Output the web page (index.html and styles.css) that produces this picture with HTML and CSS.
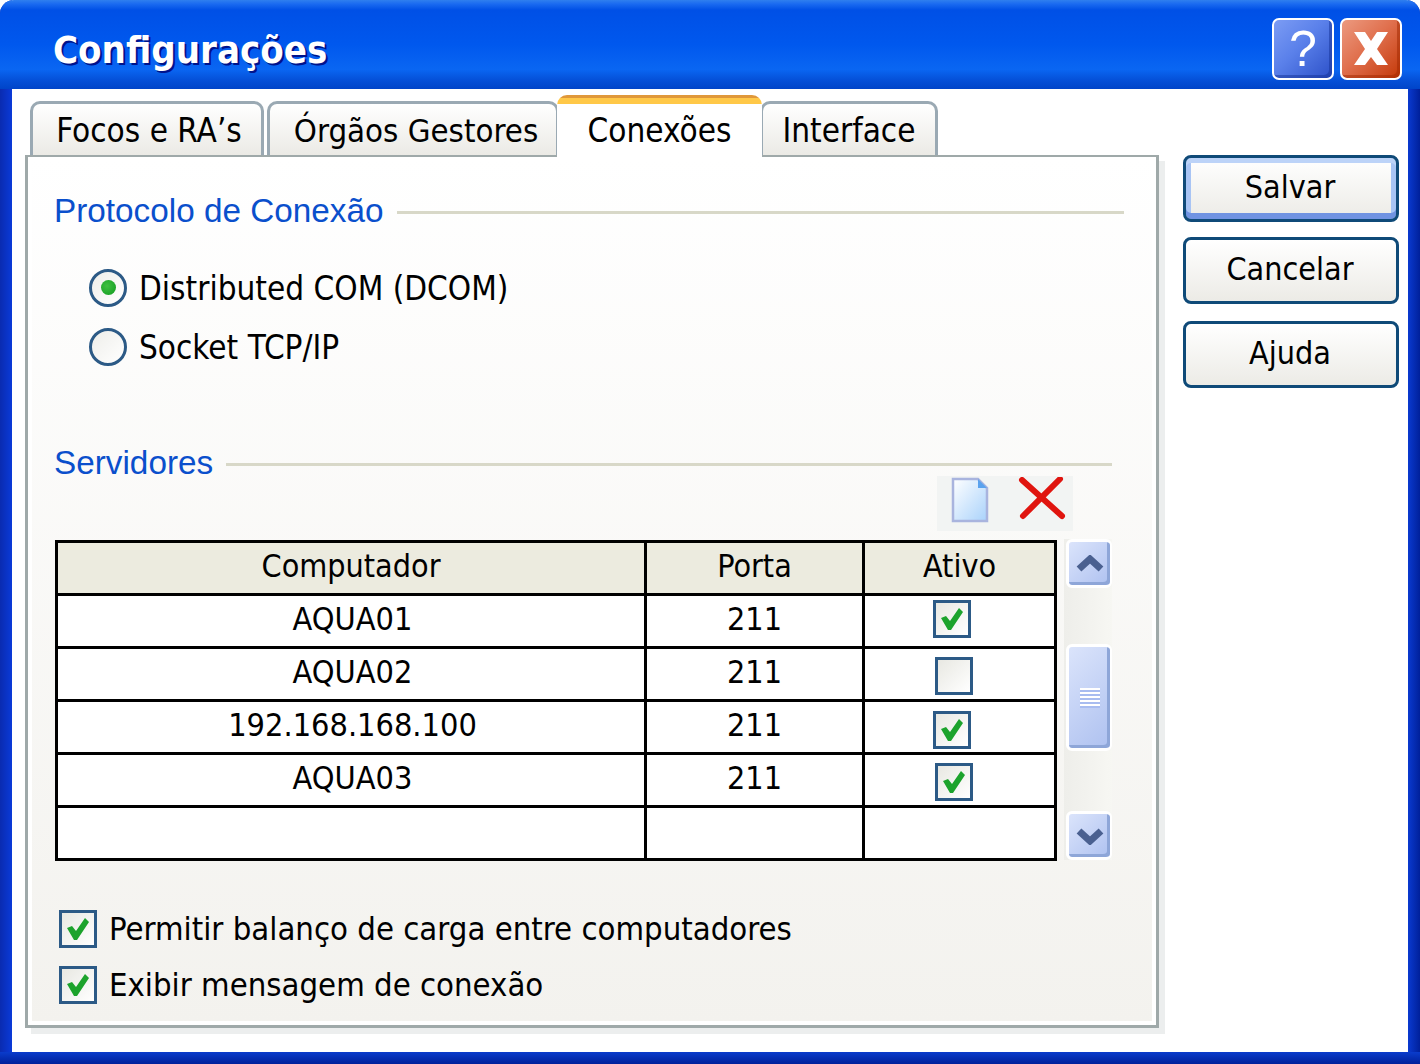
FILE: index.html
```html
<!DOCTYPE html>
<html lang="pt-BR">
<head>
    <meta charset="UTF-8">
    <meta name="viewport" content="width=device-width, initial-scale=1.0">
    <title>Configurações</title>
    <link rel="stylesheet" href="styles.css">
</head>
<body>
    <div class="window">
        <div class="titlebar">
            <h1 class="title">Configurações</h1>
            <div class="title-buttons">
                <div class="title-btn help-btn">?</div>
                <div class="title-btn close-btn">
                    <svg width="36" height="36" viewBox="0 0 36 36"><path d="M1 1h11l6 9 6-9h11L24 18l11 16H24l-6-8-6 8H1l11-16z" fill="#fff"/></svg>
                </div>
            </div>
        </div>
        <div class="client">
            <div class="main">
                <div class="tabs">
                    <div class="tab tab-focos">Focos e RA’s</div>
                    <div class="tab tab-orgaos">Órgãos Gestores</div>
                    <div class="tab tab-active">Conexões</div>
                    <div class="tab tab-interface">Interface</div>
                </div>
                <div class="panel">
                    <div class="group-title group-protocolo"><span>Protocolo de Conexão</span><i></i></div>
                    <div class="radios">
                        <div class="radio-row"><span class="radio"><b></b></span>Distributed COM (DCOM)</div>
                        <div class="radio-row"><span class="radio"></span>Socket TCP/IP</div>
                    </div>
                    <div class="group-title group-servidores"><span>Servidores</span><i></i></div>
                    <div class="toolbar">
                        <div class="toolbar-box">
                            <svg width="40" height="46" viewBox="0 0 40 46">
                                <defs><linearGradient id="doc" x1="0" y1="0" x2="1" y2="1"><stop offset="0" stop-color="#fff"/><stop offset="1" stop-color="#a9d2fb"/></linearGradient></defs>
                                <path d="M3 2h25l9 9v33H3z" fill="url(#doc)" stroke="#a9b4de" stroke-width="2.5"/>
                                <path d="M28 2l9 9h-9z" fill="#5aa2ee"/>
                            </svg>
                            <svg width="48" height="46" viewBox="0 0 48 46"><path d="M4 3l40 36M42 2L5 39" stroke="#e0150f" stroke-width="6" stroke-linecap="round" fill="none"/></svg>
                        </div>
                    </div>
                    <div class="table-wrap">
                        <table class="servers">
                            <tr><th class="col-pc">Computador</th><th class="col-port">Porta</th><th>Ativo</th></tr>
                            <tr><td class="cell-name">AQUA01</td><td>211</td><td class="cell-check"><span class="check row-1"><svg width="32" height="32" viewBox="0 0 32 32"><path d="M5 15l5-2 4 5 9-13 4 4-12 18h-3z" class="tick"/></svg></span></td></tr>
                            <tr><td class="cell-name">AQUA02</td><td>211</td><td class="cell-check"><span class="check row-2"></span></td></tr>
                            <tr><td class="cell-name">192.168.168.100</td><td>211</td><td class="cell-check"><span class="check row-3"><svg width="32" height="32" viewBox="0 0 32 32"><path d="M5 15l5-2 4 5 9-13 4 4-12 18h-3z" class="tick"/></svg></span></td></tr>
                            <tr><td class="cell-name">AQUA03</td><td>211</td><td class="cell-check"><span class="check row-2"><svg width="32" height="32" viewBox="0 0 32 32"><path d="M5 15l5-2 4 5 9-13 4 4-12 18h-3z" class="tick"/></svg></span></td></tr>
                            <tr><td></td><td></td><td></td></tr>
                        </table>
                        <div class="scrollbar">
                            <div class="sb-btn">
                                <svg width="28" height="18" viewBox="0 0 28 18"><path d="M3 14L14 4l11 10" class="arrow"/></svg>
                            </div>
                            <div class="sb-thumb">
                                <div class="grip"></div>
                            </div>
                            <div class="sb-btn">
                                <svg width="28" height="18" viewBox="0 0 28 18"><path d="M3 4l11 10L25 4" class="arrow"/></svg>
                            </div>
                        </div>
                    </div>
                    <div class="options">
                        <div class="option"><span class="check"><svg width="32" height="32" viewBox="0 0 32 32"><path d="M5 15l5-2 4 5 9-13 4 4-12 18h-3z" class="tick"/></svg></span>Permitir balanço de carga entre computadores</div>
                        <div class="option"><span class="check"><svg width="32" height="32" viewBox="0 0 32 32"><path d="M5 15l5-2 4 5 9-13 4 4-12 18h-3z" class="tick"/></svg></span>Exibir mensagem de conexão</div>
                    </div>
                </div>
            </div>
            <div class="side">
                <div class="btn btn-default">Salvar</div>
                <div class="btn">Cancelar</div>
                <div class="btn btn-help">Ajuda</div>
            </div>
        </div>
    </div>
</body>
</html>
```

FILE: styles.css
```css
html, body {
    margin: 0;
    padding: 0;
    background: #fff;
}
body {
    font-family: "DejaVu Sans Condensed", "DejaVu Sans", sans-serif;
    font-size: 32px;
    color: #000;
    overflow: hidden;
}
.window {
    width: 1420px;
    height: 1064px;
    display: flex;
    flex-direction: column;
    background:
        linear-gradient(#0a3ccc, #00209a) bottom / 100% 12px no-repeat,
        linear-gradient(90deg, #0a2bb0, #0a3ad8) left / 12px 100% no-repeat,
        linear-gradient(90deg, #0a3ad0, #00209a) right / 12px 100% no-repeat;
    border-radius: 14px 14px 0 0;
    overflow: hidden;
}
.titlebar {
    height: 89px;
    flex: none;
    box-sizing: border-box;
    padding: 18px 18px 0 53px;
    display: flex;
    justify-content: space-between;
    background: linear-gradient(#2f7fee 0, #1a6af0 4px, #0050e6 10px, #0058ee 50%, #0a66f2 78%, #0550d8 90%, #0044c8 100%);
}
.title {
    margin: 7px 0 0;
    font-size: 38px;
    font-weight: bold;
    line-height: 50px;
    color: #fff;
    text-shadow: 2px 2px 0 #00138c;
}
.title-buttons {
    display: flex;
    gap: 6px;
}
.title-btn {
    width: 62px;
    height: 62px;
    box-sizing: border-box;
    border: 2px solid #fff;
    border-radius: 7px;
    display: flex;
    align-items: center;
    justify-content: center;
    color: #fff;
}
.help-btn {
    font-size: 50px;
    font-family: "Liberation Sans", sans-serif;
    background: linear-gradient(135deg, #7c9cf4, #5a80ea 45%, #2c50c8);
    box-shadow: inset -3px -3px 0 rgba(20, 50, 150, 0.5);
}
.close-btn {
    background: linear-gradient(135deg, #ec9a80, #e0704e 45%, #c43808);
    box-shadow: inset -3px -3px 0 rgba(160, 40, 0, 0.5);
}
.client {
    flex: 1;
    margin: 0 12px 12px;
    background: #fff;
    display: flex;
    position: relative;
}
.main {
    width: 1146px;
    margin-left: 13px;
}
.tabs {
    height: 66px;
    display: flex;
    align-items: flex-end;
    padding-left: 5px;
    font-size: 33px;
}
.tab {
    box-sizing: border-box;
    height: 54px;
    border: 3px solid #9aa9b3;
    border-bottom: 0;
    border-radius: 10px 10px 0 0;
    background: linear-gradient(#fff, #ebeae5);
    display: flex;
    align-items: center;
    justify-content: center;
    padding-top: 2px;
    line-height: 40px;
}
.tab-focos { width: 234px; margin-right: 3px; padding-left: 4px; }
.tab-orgaos { width: 292px; padding-left: 6px; font-size: 32.7px; }
.tab-interface { width: 178px; margin-left: -2px; }
.tab-active {
    position: relative;
    z-index: 2;
    width: 205px;
    height: 62px;
    margin: 0 0 -2px -2px;
    border: 0;
    border-radius: 10px 10px 0 0;
    padding-top: 10px;
    background: linear-gradient(#e0983a 0, #e0983a 3px, #ffc848 3px, #ffc848 9px, #fff 9px);
}
.panel {
    box-sizing: border-box;
    width: 1134px;
    height: 873px;
    border: 3px solid #9fa9a9;
    border-top-width: 2px;
    background: linear-gradient(#fff 0, #f3f2ee 100%);
    box-shadow: inset 0 0 0 4px #fff, 6px 6px 0 #eceeee;
    padding: 0 0 0 26px;
}
.group-title {
    display: flex;
    align-items: center;
    color: #0a4fcc;
    font-family: "Liberation Sans", sans-serif;
    font-size: 33.3px;
}
.group-title i {
    flex: none;
    height: 3px;
    background: #d8d8c8;
    margin: 3px 0 0 13px;
}
.group-protocolo {
    margin-top: 31px;
    height: 46px;
}
.group-protocolo i { width: 727px; }
.group-servidores {
    height: 46px;
    margin-top: 73px;
}
.group-servidores i { width: 886px; }
.radios {
    margin: 35px 0 0 35px;
    display: flex;
    flex-direction: column;
    gap: 20px;
    font-size: 33px;
}
.radio-row {
    display: flex;
    align-items: center;
    gap: 12px;
    height: 39px;
}
.radio {
    width: 38px;
    height: 38px;
    margin-top: -2px;
    box-sizing: border-box;
    border: 3px solid #2c5a86;
    border-radius: 50%;
    background: linear-gradient(135deg, #eeeeea, #fff);
    display: flex;
    align-items: center;
    justify-content: center;
}
.radio b {
    width: 15px;
    height: 15px;
    border-radius: 50%;
    background: radial-gradient(circle at 40% 40%, #40c040, #109a20);
}
.toolbar {
    display: flex;
    justify-content: flex-end;
    width: 1019px;
    height: 63px;
    margin-top: -10px;
}
.toolbar-box {
    width: 136px;
    height: 55px;
    background: #f2f4f3;
    display: flex;
    align-items: flex-start;
    justify-content: space-between;
    padding: 1px 7px 0 13px;
    box-sizing: border-box;
}
.table-wrap {
    display: flex;
    gap: 7px;
    height: 322px;
    margin-left: 1px;
}
.servers {
    border-collapse: collapse;
    width: 1002px;
    height: 321px;
    margin-top: 1px;
    table-layout: fixed;
    background: #fff;
}
.servers th, .servers td {
    border: 3px solid #000;
    padding: 0 0 4px;
    height: 53px;
    text-align: center;
    font-weight: normal;
    line-height: 40px;
    box-sizing: border-box;
}
.servers th {
    background: #ecebdf;
}
.col-pc { width: 589px; }
.col-port { width: 218px; }
.servers .cell-name {
    padding-left: 3px;
    font-size: 32.2px;
}
.servers .cell-check {
    padding: 0 12px 0 0;
}
.check {
    box-sizing: border-box;
    flex: none;
    width: 38px;
    height: 38px;
    border: 3px solid #2c5a86;
    background: linear-gradient(135deg, #e8e8e2, #fff);
    display: inline-flex;
    align-items: center;
    justify-content: center;
    vertical-align: middle;
}
.row-1 { margin: -8px 4px 0 0; }
.row-2 { margin-top: 2px; }
.row-3 { margin: 4px 4px 0 0; }
.tick {
    fill: #1ca32c;
}
.scrollbar {
    width: 48px;
    height: 321px;
    display: flex;
    flex-direction: column;
    justify-content: space-between;
    background: linear-gradient(90deg, #eeeeea, #f7f7f3);
}
.sb-btn, .sb-thumb {
    box-sizing: border-box;
    width: 46px;
    align-self: flex-end;
    border-radius: 6px;
    background: linear-gradient(135deg, #dbe4fb, #aec1f0);
    border: 3px solid #fff;
    border-right-width: 2px;
    box-shadow: inset -3px -3px 0 #8ea6d8;
    display: flex;
    align-items: center;
    justify-content: center;
}
.sb-btn { height: 49px; }
.sb-thumb { height: 107px; margin-bottom: 4px; }
.arrow {
    fill: none;
    stroke: #4a6090;
    stroke-width: 7;
}
.grip {
    width: 20px;
    height: 20px;
    background: repeating-linear-gradient(#fff 0, #fff 2px, #a8bcf0 2px, #a8bcf0 4px);
}
.options {
    margin: 49px 0 0 5px;
    display: flex;
    flex-direction: column;
    gap: 18px;
    font-size: 32.6px;
}
.option {
    display: flex;
    align-items: center;
    gap: 12px;
    height: 38px;
}
.side {
    display: flex;
    flex-direction: column;
    margin-left: 12px;
    padding-top: 66px;
}
.btn {
    box-sizing: border-box;
    width: 216px;
    height: 67px;
    margin-bottom: 15px;
    padding: 0 2px 4px 0;
    border: 3px solid #0f4a78;
    border-radius: 8px;
    background: linear-gradient(#fff, #ecebe6);
    display: flex;
    align-items: center;
    justify-content: center;
}
.btn-help {
    margin-top: 2px;
}
.btn-default {
    box-shadow: inset 0 -6px 0 #7093e2, inset 0 5px 0 #bcd3f8, inset 5px 0 0 #a8c4f4, inset -5px 0 0 #a8c4f4;
}
```
